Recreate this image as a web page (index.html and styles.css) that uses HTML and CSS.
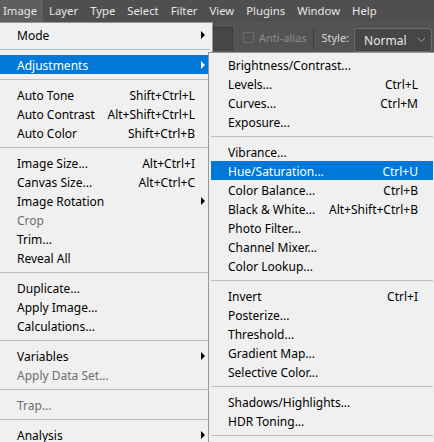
FILE: index.html
```html
<!DOCTYPE html>
<html lang="en">

<head>
    <meta charset="UTF-8" />
    <meta name="viewport" content="width=device-width, initial-scale=1.0" />
    <title>Image Menu</title>
    <link rel="stylesheet" href="styles.css">
</head>

<body>

    <div class="menubar">
        <span class="bar-item active">Image</span>
        <span class="bar-item">Layer</span>
        <span class="bar-item">Type</span>
        <span class="bar-item">Select</span>
        <span class="bar-item">Filter</span>
        <span class="bar-item">View</span>
        <span class="bar-item">Plugins</span>
        <span class="bar-item">Window</span>
        <span class="bar-item">Help</span>
    </div>

    <div class="options-bar">
        <div class="text-box"></div>
        <label class="check"><span class="check-box"></span>Anti-alias</label>
        <div class="divider"></div>
        <span class="style-label">Style:</span>
        <div class="select">
            <span>Normal</span>
            <svg width="9" height="6" viewBox="0 0 9 6"><path d="M1 1l3.5 3.5L8 1" fill="none" stroke="#9a9a9a" stroke-width="1" /></svg>
        </div>
    </div>

    <ul class="menu main-menu">
        <li class="item sub">Mode</li>
        <li class="sep"></li>
        <li class="item sub selected">Adjustments</li>
        <li class="sep"></li>
        <li class="item">Auto Tone<span class="key">Shift+Ctrl+L</span></li>
        <li class="item">Auto Contrast<span class="key">Alt+Shift+Ctrl+L</span></li>
        <li class="item">Auto Color<span class="key">Shift+Ctrl+B</span></li>
        <li class="sep"></li>
        <li class="item">Image Size...<span class="key">Alt+Ctrl+I</span></li>
        <li class="item">Canvas Size...<span class="key">Alt+Ctrl+C</span></li>
        <li class="item sub">Image Rotation</li>
        <li class="item disabled">Crop</li>
        <li class="item">Trim...</li>
        <li class="item">Reveal All</li>
        <li class="sep"></li>
        <li class="item">Duplicate...</li>
        <li class="item">Apply Image...</li>
        <li class="item">Calculations...</li>
        <li class="sep"></li>
        <li class="item sub">Variables</li>
        <li class="item disabled">Apply Data Set...</li>
        <li class="sep"></li>
        <li class="item disabled">Trap...</li>
        <li class="sep"></li>
        <li class="item sub">Analysis</li>
    </ul>

    <ul class="menu sub-menu">
        <li class="item">Brightness/Contrast...</li>
        <li class="item">Levels...<span class="key">Ctrl+L</span></li>
        <li class="item">Curves...<span class="key">Ctrl+M</span></li>
        <li class="item">Exposure...</li>
        <li class="sep"></li>
        <li class="item">Vibrance...</li>
        <li class="item selected">Hue/Saturation...<span class="key">Ctrl+U</span></li>
        <li class="item">Color Balance...<span class="key">Ctrl+B</span></li>
        <li class="item">Black &amp; White...<span class="key">Alt+Shift+Ctrl+B</span></li>
        <li class="item">Photo Filter...</li>
        <li class="item">Channel Mixer...</li>
        <li class="item">Color Lookup...</li>
        <li class="sep"></li>
        <li class="item">Invert<span class="key">Ctrl+I</span></li>
        <li class="item">Posterize...</li>
        <li class="item">Threshold...</li>
        <li class="item">Gradient Map...</li>
        <li class="item">Selective Color...</li>
        <li class="sep"></li>
        <li class="item">Shadows/Highlights...</li>
        <li class="item">HDR Toning...</li>
        <li class="sep"></li>
    </ul>

</body>

</html>
```

FILE: styles.css
```css
body {
    margin: 0;
    width: 434px;
    height: 442px;
    overflow: hidden;
    position: relative;
    background-color: #535353;
    font-family: "Noto Sans", "Liberation Sans", sans-serif;
    font-size: 12px;
}

.menubar {
    display: flex;
    height: 22px;
    margin-left: -3px;
    background-color: #4f4f4f;
    color: #e6e6e6;
    font-size: 11.3px;
    line-height: 22px;
    white-space: nowrap;
}

.bar-item {
    padding: 0 6px;
}

.bar-item.active {
    background-color: #5e5e5e;
}

.options-bar {
    display: flex;
    align-items: center;
    height: 30px;
    padding-left: 200px;
    background-color: #535353;
    color: #8c8c8c;
    font-size: 11px;
    white-space: nowrap;
}

.options-bar > * {
    flex-shrink: 0;
}

.text-box {
    width: 33px;
    height: 23px;
    margin-top: 3px;
    background-color: #464646;
    border: 1px solid #3b3b3b;
    box-sizing: border-box;
}

.check {
    display: flex;
    align-items: center;
    margin-left: 10px;
}

.check-box {
    width: 9px;
    height: 9px;
    margin-right: 5px;
    border: 1px solid #6e6e6e;
    border-radius: 2px;
}

.divider {
    width: 1px;
    height: 23px;
    margin: 2px 7px 0 7px;
    background-color: #414141;
}

.style-label {
    color: #d8d8d8;
}

.select {
    display: flex;
    align-items: center;
    justify-content: space-between;
    width: 78px;
    height: 24px;
    margin: 6px 0 0 5px;
    padding: 0 5px 0 9px;
    background-color: #464646;
    border: 1px solid #6a6a6a;
    border-radius: 3px;
    color: #e8e8e8;
    box-sizing: border-box;
    font-size: 12px;
}

.menu {
    position: absolute;
    margin: 0;
    padding: 2px;
    list-style: none;
    background-color: #f0f0f0;
    border: 1px solid #979797;
    color: #000;
}

.main-menu {
    left: -3px;
    top: 22px;
    width: 210px;
}

.sub-menu {
    left: 208px;
    top: 52px;
    width: 222px;
    box-shadow: 2px 2px 3px rgba(0, 0, 0, 0.2);
}

.item {
    display: flex;
    align-items: center;
    height: 19px;
    padding: 1px 15px 0 17px;
    box-sizing: border-box;
    position: relative;
    white-space: nowrap;
}

.key {
    margin-left: auto;
}

.item.sub::after {
    content: "";
    position: absolute;
    right: 5px;
    top: 6px;
    border-left: 4px solid #000;
    border-top: 4px solid transparent;
    border-bottom: 4px solid transparent;
}

.item.selected {
    background-color: #0078d7;
    color: #fff;
}

.item.selected.sub::after {
    border-left-color: #fff;
}

.item.disabled {
    color: #6d6d6d;
}

.sep {
    height: 1px;
    margin: 5px 0;
    background-color: #bdbdbd;
}
```
